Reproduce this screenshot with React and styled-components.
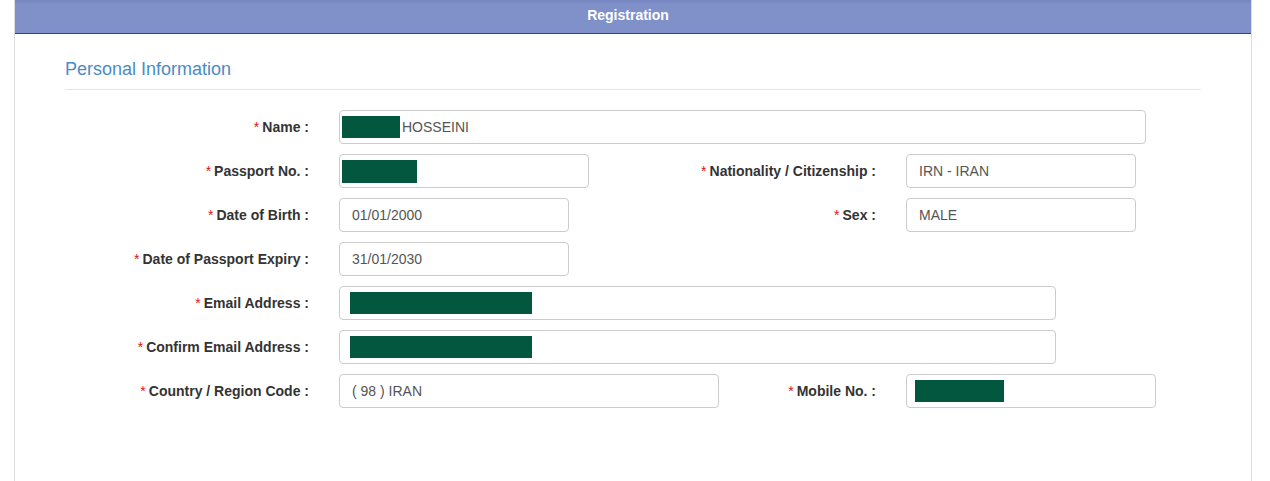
import React from "react";
import styled, { createGlobalStyle } from "styled-components";

const Global = createGlobalStyle`
  html, body { margin: 0; padding: 0; background: #fff; }
  body { font-family: "Liberation Sans", Arial, sans-serif; font-size: 14px; color: #333; }
`;

const Page = styled.div`
  height: 481px;
  overflow: hidden;
  padding-left: 14px;
  width: 1238px;
`;

const Panel = styled.section`
  border-left: 1px solid #dcdcdc;
  border-right: 1px solid #dcdcdc;
  height: 481px;
  box-sizing: border-box;
`;

const Header = styled.header`
  height: 34px;
  border-bottom: 1px solid #3b4656;
  background: linear-gradient(#7485c0 0px, #7f91c8 4px, #7f91c8 100%);
  color: #fff;
  font-weight: bold;
  font-size: 14px;
  display: flex;
  align-items: center;
  justify-content: center;
  padding-bottom: 4px;
  padding-right: 10px;
  box-sizing: border-box;
`;

const Body = styled.div`
  padding: 25px 50px 0 50px;
`;

const Legend = styled.h2`
  margin: 0;
  font-weight: normal;
  font-size: 18px;
  line-height: 20px;
  color: #4a8bc6;
  padding-bottom: 10px;
  border-bottom: 1px solid #e5e5e5;
`;

const Form = styled.div`
  margin-top: 20px;
  display: flex;
  flex-direction: column;
  gap: 10px;
`;

const Row = styled.div`
  display: grid;
  grid-template-columns: 244px 263px 244px 1fr;
  column-gap: 30px;
  height: 34px;
  align-items: center;
`;

const Label = styled.label`
  font-weight: bold;
  font-size: 14px;
  color: #333;
  text-align: right;
  white-space: nowrap;
  grid-column: ${(p) => p.$col || 1};
`;

const Star = styled.span`
  color: #e0121a;
  font-weight: normal;
  margin-right: 3px;
`;

const Field = styled.div`
  grid-column: ${(p) => p.$span || "auto"};
  width: ${(p) => p.$w}px;
  height: 34px;
  box-sizing: border-box;
  border: 1px solid #cccccc;
  border-radius: 4px;
  background: #fff;
  display: flex;
  align-items: center;
  padding-left: ${(p) => (p.$pad != null ? p.$pad : 12)}px;
  font-size: 14px;
  color: #555;
  white-space: nowrap;
`;

const Redact = styled.span`
  display: inline-block;
  width: ${(p) => p.$w}px;
  height: ${(p) => p.$h || 22}px;
  background: #03573f;
  margin-right: 2px;
`;

const Lbl = ({ children, col }) => (
  <Label $col={col}>
    <Star>*</Star>
    {children}
  </Label>
);

export default function App() {
  return (
    <>
      <Global />
      <Page>
        <Panel>
          <Header>Registration</Header>
          <Body>
            <Legend>Personal Information</Legend>
            <Form>
              <Row>
                <Lbl>Name :</Lbl>
                <Field $span="2 / -1" $w={807} $pad={2}>
                  <Redact $w={58} />
                  HOSSEINI
                </Field>
              </Row>
              <Row>
                <Lbl>Passport No. :</Lbl>
                <Field $w={250} $pad={2}>
                  <Redact $w={75} $h={23} />
                </Field>
                <Lbl col={3}>Nationality / Citizenship :</Lbl>
                <Field $w={230}>IRN - IRAN</Field>
              </Row>
              <Row>
                <Lbl>Date of Birth :</Lbl>
                <Field $w={230}>01/01/2000</Field>
                <Lbl col={3}>Sex :</Lbl>
                <Field $w={230}>MALE</Field>
              </Row>
              <Row>
                <Lbl>Date of Passport Expiry :</Lbl>
                <Field $w={230}>31/01/2030</Field>
              </Row>
              <Row>
                <Lbl>Email Address :</Lbl>
                <Field $span="2 / -1" $w={717} $pad={10}>
                  <Redact $w={182} />
                </Field>
              </Row>
              <Row>
                <Lbl>Confirm Email Address :</Lbl>
                <Field $span="2 / -1" $w={717} $pad={10}>
                  <Redact $w={182} />
                </Field>
              </Row>
              <Row>
                <Lbl>Country / Region Code :</Lbl>
                <Field $w={380}>( 98 ) IRAN</Field>
                <Lbl col={3}>Mobile No. :</Lbl>
                <Field $w={250} $pad={8}>
                  <Redact $w={89} />
                </Field>
              </Row>
            </Form>
          </Body>
        </Panel>
      </Page>
    </>
  );
}
